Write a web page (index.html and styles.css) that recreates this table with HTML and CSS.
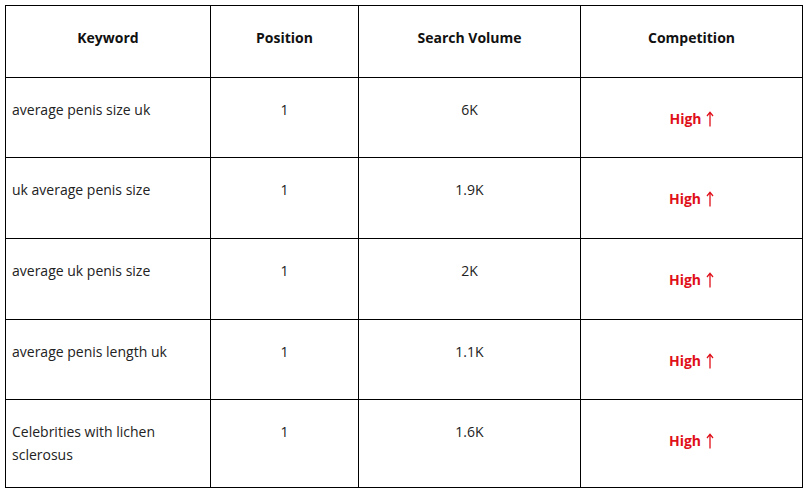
FILE: index.html
```html
<!DOCTYPE html>
<html>
<head>
<meta charset="utf-8">
<link rel="stylesheet" href="styles.css">
</head>
<body>
<table class="kw-table">
  <colgroup>
    <col class="c1"><col class="c2"><col class="c3"><col class="c4">
  </colgroup>
  <thead>
    <tr class="head-row">
      <th>Keyword</th>
      <th>Position</th>
      <th>Search Volume</th>
      <th>Competition</th>
    </tr>
  </thead>
  <tbody>
    <tr>
      <td class="kw">average penis size uk</td>
      <td class="num">1</td>
      <td class="num">6K</td>
      <td class="comp"><div class="high">High <svg class="arrow wide" viewBox="0 0 8 16" width="8" height="16"><path d="M4 15.5V1.5M1 5L4 1.2L7 5" fill="none" stroke="#e0101a" stroke-width="1.3"/></svg></div></td>
    </tr>
    <tr class="tall">
      <td class="kw">uk average penis size</td>
      <td class="num">1</td>
      <td class="num">1.9K</td>
      <td class="comp"><div class="high">High<svg class="arrow" viewBox="0 0 8 16" width="8" height="16"><path d="M4 15.5V1.5M1 5L4 1.2L7 5" fill="none" stroke="#e0101a" stroke-width="1.3"/></svg></div></td>
    </tr>
    <tr class="tall">
      <td class="kw">average uk penis size</td>
      <td class="num">1</td>
      <td class="num">2K</td>
      <td class="comp"><div class="high">High<svg class="arrow" viewBox="0 0 8 16" width="8" height="16"><path d="M4 15.5V1.5M1 5L4 1.2L7 5" fill="none" stroke="#e0101a" stroke-width="1.3"/></svg></div></td>
    </tr>
    <tr>
      <td class="kw">average penis length uk</td>
      <td class="num">1</td>
      <td class="num">1.1K</td>
      <td class="comp"><div class="high">High<svg class="arrow" viewBox="0 0 8 16" width="8" height="16"><path d="M4 15.5V1.5M1 5L4 1.2L7 5" fill="none" stroke="#e0101a" stroke-width="1.3"/></svg></div></td>
    </tr>
    <tr class="last">
      <td class="kw">Celebrities with lichen sclerosus</td>
      <td class="num">1</td>
      <td class="num">1.6K</td>
      <td class="comp"><div class="high">High<svg class="arrow" viewBox="0 0 8 16" width="8" height="16"><path d="M4 15.5V1.5M1 5L4 1.2L7 5" fill="none" stroke="#e0101a" stroke-width="1.3"/></svg></div></td>
    </tr>
  </tbody>
</table>
</body>
</html>
```
FILE: styles.css
```css
html, body {
  margin: 0;
  padding: 0;
  background: #ffffff;
}
body {
  padding: 5px 0 0 5px;
  font-family: "Open Sans", "Noto Sans", sans-serif;
  font-size: 14px;
  line-height: 23px;
  color: #222222;
}
.kw-table {
  border-collapse: collapse;
  table-layout: fixed;
  width: 798px;
}
.c1 { width: 205px; }
.c2 { width: 148px; }
.c3 { width: 222px; }
.c4 { width: 222px; }
.kw-table th,
.kw-table td {
  border: 1px solid #000000;
  vertical-align: top;
  padding: 20px 6px 0 6px;
}
.kw-table th {
  height: 51px;
  font-weight: 700;
  color: #111111;
  text-align: center;
}
.kw-table td {
  height: 59px;
}
.kw-table tr.tall td {
  height: 60px;
}
.kw-table tr.last td {
  height: 67px;
}
.num { text-align: center; }
.kw { text-align: left; }
.comp { text-align: center; }
.high {
  display: inline-flex;
  align-items: center;
  padding-top: 9px;
  color: #e0101a;
  font-weight: 700;
}
.arrow {
  margin-left: 5px;
}
.arrow.wide {
  margin-left: 4px;
}
```
